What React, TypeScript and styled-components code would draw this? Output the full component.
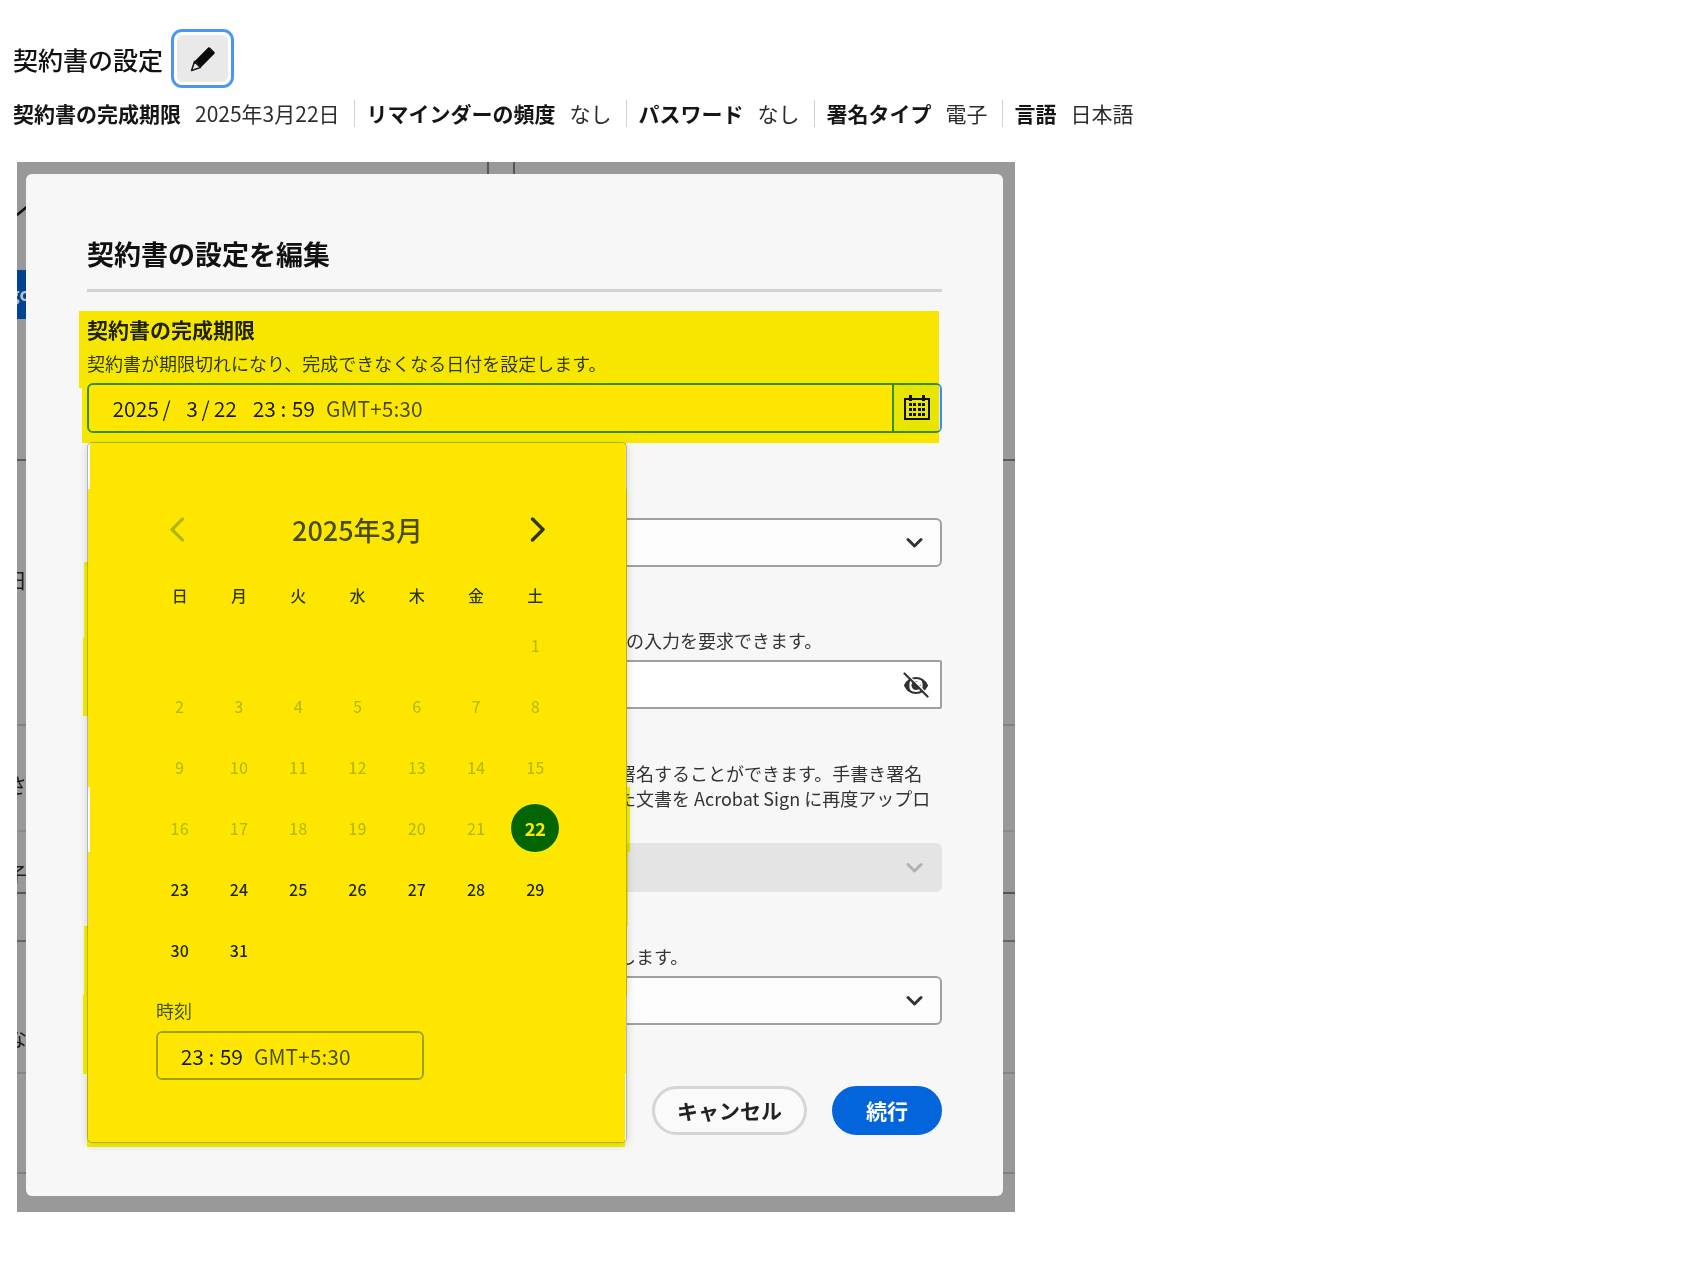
import React from "react";
import styled, { createGlobalStyle } from "styled-components";

const GlobalStyle = createGlobalStyle`
  *, *::before, *::after { box-sizing: border-box; }
  body { margin: 0; background: #fff; }
  body, button, input, select {
    font-family: "Noto Sans CJK JP", "Noto Sans", sans-serif;
    color: #1a1a1a;
  }
  h1, h2, p, dl, dd { margin: 0; }
`;

const Page = styled.main`
  padding: 29px 13px 56px;
`;

const Header = styled.header`
  display: flex;
  align-items: center;
  gap: 8px;
`;

const PageTitle = styled.h1`
  font-size: 25px;
  line-height: 40px;
  font-weight: 500;
  color: #111;
`;

const EditButton = styled.button`
  display: grid;
  width: 63px;
  height: 59px;
  padding: 3px;
  border: 3px solid #4b96f3;
  border-radius: 11px;
  background: #fff;
`;

const EditFace = styled.span`
  display: grid;
  place-items: center;
  border-radius: 6px;
  background: #e9e9e9;
`;

const Summary = styled.dl`
  display: flex;
  flex-wrap: wrap;
  margin-top: 12px;
  font-size: 21px;
  line-height: 27px;
`;

const SummaryItem = styled.div`
  display: flex;
  gap: 14px;
  padding-right: 14px;
  & + & {
    padding-left: 12px;
    border-left: 1px solid #d2d2d2;
  }
  dt { font-weight: 700; color: #161616; }
  dd { color: #2c2c2c; }
`;

const Stage = styled.section`
  position: relative;
  max-width: 998px;
  margin: 35px 0 0 4px;
  padding: 12px 12px 16px 9px;
  background: #999;
`;

const Behind = styled.div`
  position: absolute;
  inset: 0;
  overflow: hidden;
`;

const Rule = styled.span<{ $top: number; $color: string }>`
  position: absolute;
  left: 0;
  right: 0;
  top: ${(p) => p.$top}px;
  height: 2px;
  background: ${(p) => p.$color};
`;

const Gutter = styled.span`
  position: absolute;
  top: 0;
  left: 470px;
  width: 28px;
  height: 12px;
  border: solid #555;
  border-width: 0 2px;
`;

const Scrap = styled.span<{ $top: number }>`
  position: absolute;
  left: -11px;
  top: ${(p) => p.$top}px;
  font-size: 21px;
  line-height: 28px;
  color: #1c1c1c;
`;

const Stroke = styled.svg`
  position: absolute;
  left: 0;
  top: 43px;
`;

const BlueTag = styled.span`
  position: absolute;
  left: 0;
  top: 108px;
  width: 40px;
  height: 49px;
  background: #004491;
  color: #b4bcc6;
  font-size: 18px;
  font-weight: 700;
  line-height: 46px;
  text-indent: -8px;
`;

const Dialog = styled.form`
  position: relative;
  padding: 60px 61px 61px;
  border-radius: 6px;
  background: #f7f7f7;
`;

const DialogTitle = styled.h2`
  padding-bottom: 15px;
  border-bottom: 3px solid #d3d3d3;
  font-size: 27px;
  line-height: 40px;
  font-weight: 700;
  color: #111;
`;

const DateField = styled.div`
  position: relative;
  margin-top: 23px;
`;

const Label = styled.label`
  display: block;
  margin-bottom: 8px;
  font-size: 21px;
  line-height: 28px;
  font-weight: 700;
  color: #222;
`;

const Hint = styled.p<{ $indent?: number; $lines?: number }>`
  min-height: ${(p) => (p.$lines || 1) * 25}px;
  margin-bottom: 7px;
  padding-left: ${(p) => p.$indent || 0}px;
  font-size: 18px;
  line-height: 25px;
  color: #333;
  white-space: nowrap;
`;

const DateBox = styled.div`
  display: flex;
  height: 50px;
  border: 2px solid #378ef0;
  border-radius: 6px;
  overflow: hidden;
  background: #fff;
`;

const Segments = styled.div`
  display: flex;
  flex: 1;
  align-items: center;
  padding-left: 22px;
  font-size: 21px;
  line-height: 30px;
`;

const Segment = styled.input<{ $width: number }>`
  width: ${(p) => p.$width}px;
  padding: 0;
  border: 0;
  background: transparent;
  font-size: 21px;
  line-height: 30px;
  text-align: right;
`;

const Mark = styled.span`
  width: 15px;
  text-align: center;
`;

const Zone = styled.span`
  margin-left: 11px;
  color: #4b4b4b;
`;

const CalendarButton = styled.button`
  display: grid;
  place-items: center;
  width: 48px;
  padding: 0;
  border: 0;
  border-left: 2px solid #378ef0;
  background: #e8e8e8;
`;

const Popover = styled.div`
  position: absolute;
  z-index: 2;
  top: calc(100% + 9px);
  left: 0;
  width: 540px;
  padding: 67px 61px 62px 62px;
  border: 1px solid #b4b4b4;
  border-radius: 5px;
  background: #fff;
  box-shadow: 0 2px 8px rgba(0, 0, 0, 0.16);
`;

const MonthBar = styled.div`
  display: flex;
  justify-content: space-between;
  align-items: center;
  height: 40px;
  margin: 0 -3px 27px;
  font-size: 27px;
  line-height: 40px;
  font-weight: 500;
  color: #4b4b4b;
`;

const MonthButton = styled.button`
  display: grid;
  place-items: center;
  width: 59px;
  height: 36px;
  padding: 0;
  border: 0;
  background: transparent;
  color: #333;
  &:disabled { color: #b3b3b3; }
`;

const Month = styled.table`
  width: 100%;
  table-layout: fixed;
  border-collapse: collapse;
  th, td { padding: 0; text-align: center; vertical-align: middle; }
  th { height: 37px; padding-bottom: 2px; font-size: 16px; font-weight: 500; color: #333; }
  td { height: 61px; }
`;

const Day = styled.button<{ $selected?: boolean }>`
  width: 48px;
  height: 48px;
  padding: 0;
  border: 0;
  border-radius: 50%;
  background: ${(p) => (p.$selected ? "#0265dc" : "transparent")};
  color: ${(p) => (p.$selected ? "#fff" : "#222")};
  font-size: ${(p) => (p.$selected ? 18 : 16)}px;
  font-weight: ${(p) => (p.$selected ? 700 : 500)};
  &:disabled { color: #b8b8b8; }
`;

const TimeField = styled.div`
  width: 268px;
  margin: 18px 0 0 6px;
`;

const TimeLabel = styled.label`
  display: block;
  margin-bottom: 9px;
  font-size: 18px;
  line-height: 24px;
  color: #4b4b4b;
`;

const TimeBox = styled.div`
  display: flex;
  height: 49px;
  border: 2px solid #a0a0a0;
  border-radius: 6px;
`;

const Highlight = styled.span<{ $top: number; $height: number; $left: number; $width: number }>`
  position: absolute;
  z-index: 3;
  top: ${(p) => p.$top}px;
  left: ${(p) => p.$left}px;
  width: ${(p) => p.$width}px;
  height: ${(p) => p.$height}px;
  background: #ffe600;
  mix-blend-mode: darken;
  pointer-events: none;
`;

const Field = styled.div<{ $space: number }>`
  margin-top: ${(p) => p.$space}px;
`;

const Control = styled.div`
  display: grid;
  align-items: center;
  > * { grid-area: 1 / 1; }
  > svg { justify-self: end; margin-right: 19px; pointer-events: none; }
`;

const Select = styled.select`
  appearance: none;
  width: 100%;
  height: 49px;
  padding: 0 48px 0 20px;
  border: 2px solid #a0a0a0;
  border-radius: 6px;
  background: #fdfdfd;
  font-size: 18px;
  &:disabled { border-color: #e4e4e4; background: #e4e4e4; opacity: 1; }
`;

const PasswordInput = styled.input`
  width: 100%;
  height: 49px;
  padding: 0 48px 0 20px;
  border: 2px solid #a0a0a0;
  border-radius: 2px;
  background: #fff;
  font-size: 18px;
`;

const RevealButton = styled.button`
  display: grid;
  justify-self: end;
  margin-right: 13px;
  padding: 0;
  border: 0;
  background: transparent;
`;

const Actions = styled.div`
  display: flex;
  justify-content: flex-end;
  gap: 25px;
  margin-top: 61px;
`;

const ActionButton = styled.button<{ $primary?: boolean }>`
  height: 49px;
  padding: 0 ${(p) => (p.$primary ? 31 : 22)}px 2px;
  border: 3px solid ${(p) => (p.$primary ? "#0265dc" : "#d5d5d5")};
  border-radius: 25px;
  background: ${(p) => (p.$primary ? "#0265dc" : "#fafafa")};
  color: ${(p) => (p.$primary ? "#fff" : "#222")};
  font-size: 21px;
  line-height: 40px;
  font-weight: 700;
`;

const PencilIcon = () => (
  <svg width="26" height="26" viewBox="0 0 26 26" aria-hidden="true">
    <path d="M18.2 1.600a1.200 1.200 0 0 1 1.700 0l4.500 4.500a1.200 1.200 0 0 1 0 1.700L10.800 21.400 4.600 15.200Z" fill="#0a0a0a" />
    <path d="M4.500 15.600 10.400 21.500 1.600 24.400Z" fill="#e9e9e9" stroke="#1c1c1c" strokeWidth="1.600" strokeLinejoin="round" />
  </svg>
);

const CalendarIcon = () => (
  <svg width="27" height="26" viewBox="0 0 27 26" fill="#0d0d0d" aria-hidden="true">
    <rect x="1" y="4" width="24" height="20" fill="none" stroke="#0d0d0d" strokeWidth="2" />
    <rect x="5" y="0" width="3" height="6" />
    <rect x="18" y="0" width="3" height="6" />
    {[8, 13, 18].map((y) =>
      [5, 9, 14, 18].map((x) => <rect key={`${x}-${y}`} x={x} y={y} width="3" height="3" />)
    )}
  </svg>
);

const Chevron = ({ color }: { color: string }) => (
  <svg width="17" height="12" viewBox="0 0 17 12" fill="none" aria-hidden="true">
    <path d="M2 2.5 8.5 9 15 2.5" stroke={color} strokeWidth="3" strokeLinecap="round" strokeLinejoin="round" />
  </svg>
);

const Arrow = ({ back }: { back?: boolean }) => (
  <svg width="16" height="26" viewBox="0 0 16 26" fill="none" aria-hidden="true">
    <path
      d={back ? "M13.5 2 3 12.5 13.5 23" : "M2.5 2 13 12.5 2.5 23"}
      stroke="currentColor"
      strokeWidth="3.5"
      strokeLinecap="round"
      strokeLinejoin="round"
    />
  </svg>
);

const EyeOffIcon = () => (
  <svg width="26" height="26" viewBox="0 0 26 26" fill="none" aria-hidden="true">
    <path d="M2 13.500C4.500 8.500 8 6 13 6S21.500 8.500 24 13.500C21.500 18.500 18 21 13 21S4.500 18.500 2 13.500Z" stroke="#333" strokeWidth="2" />
    <path d="M2 13.500C3.500 10.200 5.500 8 8.200 7 6.800 9 6.400 11 6.400 13.500S7 18 8.400 20C5.500 19 3.500 16.800 2 13.500Z" fill="#333" />
    <path d="M24 13.500C22.500 10.200 20.500 8 17.800 7 19.200 9 19.600 11 19.600 13.500S19 18 17.600 20C20.500 19 22.500 16.800 24 13.500Z" fill="#333" />
    <circle cx="13" cy="13.500" r="4.500" fill="#333" />
    <circle cx="15.200" cy="11.300" r="2.200" fill="#fff" />
    <path d="M3.200 1 26 23.800" stroke="#fff" strokeWidth="1.600" />
    <path d="M1.500 1.500 24.500 24.500" stroke="#333" strokeWidth="2.200" strokeLinecap="round" />
  </svg>
);

const summary = [
  ["契約書の完成期限", "2025年3月22日"],
  ["リマインダーの頻度", "なし"],
  ["パスワード", "なし"],
  ["署名タイプ", "電子"],
  ["言語", "日本語"],
];

const rules: [number, string][] = [
  [297, "#5c5c5c"],
  [562, "#838383"],
  [668, "#8b8b8b"],
  [730, "#555"],
  [778, "#666"],
  [910, "#858585"],
  [1010, "#808080"],
];

const scraps: [number, string][] = [
  [403, "日"],
  [608, "さ"],
  [697, "子"],
  [861, "な"],
];

// Marker strokes over the date field and its calendar: top, height, left, width.
const strokes: [number, number, number, number][] = [
  [-4, 77, -8, 860],
  [73, 55, -5, 857],
  [128, 46, 3, 536],
  [174, 73, 1, 539],
  [247, 76, -3, 543],
  [323, 78, -4, 544],
  [401, 71, 1, 539],
  [472, 65, 3, 540],
  [537, 74, 1, 540],
  [611, 69, -3, 543],
  [680, 79, -4, 543],
  [759, 73, 0, 538],
];

const weekdays = ["日", "月", "火", "水", "木", "金", "土"];
const firstWeekday = 6;
const selectedDay = 22;
const weeks = Array.from({ length: 6 }, (_, w) =>
  Array.from({ length: 7 }, (_, d) => {
    const day = w * 7 + d - firstWeekday + 1;
    return day >= 1 && day <= 31 ? day : null;
  })
);

const TimeSegments = ({ id }: { id: string }) => (
  <>
    <Segment id={id} $width={24} aria-label="時" defaultValue="23" />
    <Mark>:</Mark>
    <Segment $width={24} aria-label="分" defaultValue="59" />
    <Zone>GMT+5:30</Zone>
  </>
);

export default function App() {
  return (
    <>
      <GlobalStyle />
      <Page>
        <Header>
          <PageTitle>契約書の設定</PageTitle>
          <EditButton type="button" aria-label="編集">
            <EditFace>
              <PencilIcon />
            </EditFace>
          </EditButton>
        </Header>
        <Summary>
          {summary.map(([name, value]) => (
            <SummaryItem key={name}>
              <dt>{name}</dt>
              <dd>{value}</dd>
            </SummaryItem>
          ))}
        </Summary>

        <Stage>
          <Behind aria-hidden="true">
            {rules.map(([top, color]) => (
              <Rule key={top} $top={top} $color={color} />
            ))}
            <Gutter />
            <Stroke width="12" height="12" viewBox="0 0 12 12">
              <path d="M0 10 12 0" stroke="#111" strokeWidth="2.500" />
            </Stroke>
            <BlueTag>go</BlueTag>
            {scraps.map(([top, text]) => (
              <Scrap key={top} $top={top}>
                {text}
              </Scrap>
            ))}
          </Behind>

          <Dialog role="dialog" aria-label="契約書の設定を編集">
            <DialogTitle>契約書の設定を編集</DialogTitle>

            <DateField>
              <Label htmlFor="year">契約書の完成期限</Label>
              <Hint>契約書が期限切れになり、完成できなくなる日付を設定します。</Hint>
              <DateBox>
                <Segments>
                  <Segment id="year" $width={48} aria-label="年" defaultValue="2025" />
                  <Mark>/</Mark>
                  <Segment $width={24} aria-label="月" defaultValue="3" />
                  <Mark>/</Mark>
                  <Segment $width={24} aria-label="日" defaultValue="22" />
                  <Mark />
                  <TimeSegments id="hour" />
                </Segments>
                <CalendarButton type="button" aria-label="カレンダー">
                  <CalendarIcon />
                </CalendarButton>
              </DateBox>

              <Popover>
                <MonthBar>
                  <MonthButton type="button" aria-label="前の月" disabled>
                    <Arrow back />
                  </MonthButton>
                  2025年3月
                  <MonthButton type="button" aria-label="次の月">
                    <Arrow />
                  </MonthButton>
                </MonthBar>
                <Month>
                  <thead>
                    <tr>
                      {weekdays.map((name) => (
                        <th key={name} scope="col">
                          {name}
                        </th>
                      ))}
                    </tr>
                  </thead>
                  <tbody>
                    {weeks.map((week, w) => (
                      <tr key={w}>
                        {week.map((day, d) => (
                          <td key={d}>
                            {day && (
                              <Day type="button" disabled={day < selectedDay} $selected={day === selectedDay}>
                                {day}
                              </Day>
                            )}
                          </td>
                        ))}
                      </tr>
                    ))}
                  </tbody>
                </Month>
                <TimeField>
                  <TimeLabel htmlFor="time-hour">時刻</TimeLabel>
                  <TimeBox>
                    <Segments>
                      <TimeSegments id="time-hour" />
                    </Segments>
                  </TimeBox>
                </TimeField>
              </Popover>

              {strokes.map(([top, height, left, width]) => (
                <Highlight key={top} $top={top} $height={height} $left={left} $width={width} />
              ))}
            </DateField>

            <Field $space={85}>
              <Control>
                <Select aria-label="リマインダーの頻度" />
                <Chevron color="#333" />
              </Control>
            </Field>

            <Field $space={61}>
              <Hint $indent={539}>の入力を要求できます。</Hint>
              <Control>
                <PasswordInput type="password" aria-label="パスワード" />
                <RevealButton type="button" aria-label="パスワードを表示">
                  <EyeOffIcon />
                </RevealButton>
              </Control>
            </Field>

            <Field $space={52}>
              <Hint $indent={531} $lines={3}>
                署名することができます。手書き署名
                <br />
                た文書を Acrobat Sign に再度アップロ
              </Hint>
              <Control>
                <Select aria-label="署名タイプ" disabled />
                <Chevron color="#b1b1b1" />
              </Control>
            </Field>

            <Field $space={52}>
              <Hint $indent={531}>します。</Hint>
              <Control>
                <Select aria-label="言語" />
                <Chevron color="#333" />
              </Control>
            </Field>

            <Actions>
              <ActionButton type="button">キャンセル</ActionButton>
              <ActionButton type="submit" $primary>
                続行
              </ActionButton>
            </Actions>
          </Dialog>
        </Stage>
      </Page>
    </>
  );
}
